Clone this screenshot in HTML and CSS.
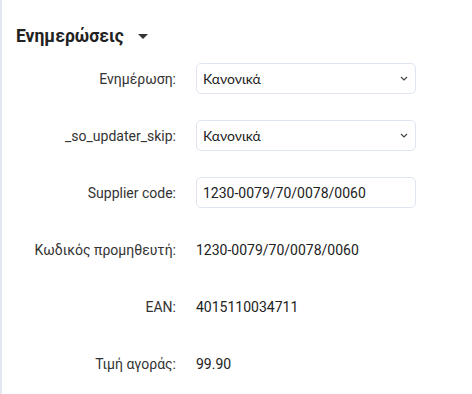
FILE: index.html
```html
<!DOCTYPE html>
<html lang="el">
<head>
<meta charset="utf-8">
<link rel="stylesheet" href="styles.css">
</head>
<body>
<div class="panel">
  <h2 class="title">Ενημερώσεις <span class="caret"></span></h2>
  <div class="form">
    <label class="lbl">Ενημέρωση:</label>
    <div class="val"><select class="sel"><option>Κανονικά</option></select></div>
    <label class="lbl">_so_updater_skip:</label>
    <div class="val"><select class="sel"><option>Κανονικά</option></select></div>
    <label class="lbl">Supplier code:</label>
    <div class="val"><input class="inp" type="text" value="1230-0079/70/0078/0060"></div>
    <label class="lbl">Κωδικός προμηθευτή:</label>
    <div class="val text">1230-0079/70/0078/0060</div>
    <label class="lbl">EAN:</label>
    <div class="val text">4015110034711</div>
    <label class="lbl">Τιμή αγοράς:</label>
    <div class="val text">99.90</div>
  </div>
</div>
</body>
</html>
```
FILE: styles.css
```css
html, body { margin: 0; padding: 0; background: #fff; }
body {
  font-family: Roboto, "Liberation Sans", sans-serif;
  color: #2b2b2b;
  border-left: 2px solid #e2e7f1;
  min-height: 394px;
  box-sizing: border-box;
}
.panel { padding: 24px 0 0 14px; }
.title {
  margin: 0 0 15px 0;
  font-size: 17.5px;
  line-height: 24px;
  font-weight: 700;
  color: #222;
  display: flex;
  align-items: center;
}
.caret {
  display: inline-block;
  width: 0; height: 0;
  border-left: 5px solid transparent;
  border-right: 5px solid transparent;
  border-top: 5px solid #333;
  margin-left: 14px;
  margin-top: 0;
}
.form {
  display: grid;
  grid-template-columns: 160px 220px;
  column-gap: 20px;
  row-gap: 26px;
  grid-auto-rows: 31px;
}
.lbl {
  display: flex;
  align-items: center;
  justify-content: flex-end;
  font-size: 14px;
  color: #333;
  white-space: nowrap;
}
.val { display: flex; align-items: center; }
.val.text { font-size: 14px; color: #222; }
.sel, .inp {
  width: 100%;
  height: 31px;
  box-sizing: border-box;
  border: 1px solid #dfe5f0;
  border-radius: 5px;
  background-color: #fff;
  color: #222;
  font-size: 14px;
  padding: 0 6px;
  outline: none;
}
.sel {
  -webkit-appearance: none;
  appearance: none;
  font-family: Lato, Roboto, sans-serif;
  background-image: url("data:image/svg+xml,%3Csvg xmlns='http://www.w3.org/2000/svg' width='8' height='5' viewBox='0 0 8 5'%3E%3Cpath d='M1 1l3 3 3-3' fill='none' stroke='%23444' stroke-width='1.2'/%3E%3C/svg%3E");
  background-repeat: no-repeat;
  background-position: right 7px center;
}
.inp { font-family: Roboto, sans-serif; font-size: 14px; }
```
